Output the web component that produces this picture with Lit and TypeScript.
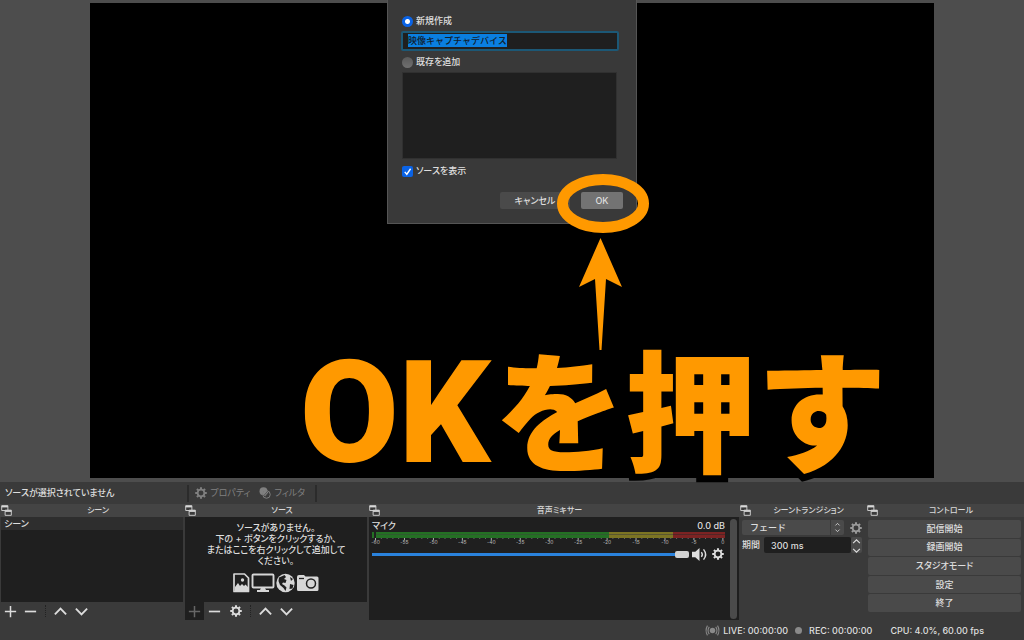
import { LitElement, html, css, svg, nothing } from "lit";
import { customElement, property, query } from "lit/decorators.js";

const controlsLabels = ["配信開始", "録画開始", "スタジオモード", "設定", "終了"];
const dbMarks = [-60, -55, -50, -45, -40, -35, -30, -25, -20, -15, -10, -5, 0];

const glyphs: Record<string, unknown> = {
  plus: svg`<path d="M8 2v12M2 8h12" stroke="currentColor" stroke-width="1.6" fill="none"/>`,
  minus: svg`<path d="M2 8h12" stroke="currentColor" stroke-width="1.8" fill="none"/>`,
  up: svg`<path d="M2 11 8 5l6 6" stroke="currentColor" stroke-width="2" fill="none"/>`,
  down: svg`<path d="M2 5l6 6 6-6" stroke="currentColor" stroke-width="2" fill="none"/>`,
  updown: svg`<path d="M5 5l3-3 3 3M5 11l3 3 3-3" stroke="currentColor" stroke-width="1.2" fill="none"/>`,
  gear: svg`<circle cx="8" cy="8" r="4.5" fill="none" stroke="currentColor" stroke-width="2.4"/>
    <g stroke="currentColor" stroke-width="2.8"><path d="M8 .3v2.700M8 13v2.700M.3 8h2.700M13 8h2.700M2.600 2.600l1.900 1.900M11.500 11.500l1.900 1.900M2.600 13.400l1.900-1.900M11.500 4.500l1.900-1.900"/></g>`,
  filter: svg`<circle cx="6" cy="5.500" r="5.300" fill="currentColor"/><circle cx="10" cy="10" r="5" fill="#3a3a3a" stroke="currentColor" stroke-width="1.300"/><path d="M5.500 11a5 5 0 0 1 6-6.500l1 3-4 5z" fill="currentColor"/><path d="M6 12l6-7M8 13l5-6" stroke="#3a3a3a" stroke-width=".8"/>`,
  float: svg`<path d="M1 1h9v7H1z" fill="#3a3a3a" stroke="currentColor" stroke-width="1.300"/><path d="M1 1h9v2.500H1z" fill="currentColor"/><path d="M6 7.500h9V15H6z" fill="#3a3a3a" stroke="currentColor" stroke-width="1.300"/><path d="M6 7.500h9V10H6z" fill="currentColor"/>`,
  speaker: svg`<path d="M0 5h3.500L8 1v14l-4.500-4H0z" fill="currentColor"/><path d="M10 5.500q2 2.500 0 5M12.300 2.500q4.500 5.500 0 11" stroke="currentColor" stroke-width="1.500" fill="none"/>`,
  live: svg`<circle cx="8" cy="8" r="3.400" fill="currentColor"/><path d="M4 3.500q-3 4.500 0 9M12 3.500q3 4.500 0 9M1.800 2q-3.500 6 0 12M14.200 2q3.500 6 0 12" stroke="currentColor" stroke-width="1.300" fill="none"/>`,
  check: svg`<path d="M4 8.500l3 3.500 5.500-8" stroke="#fff" stroke-width="2" fill="none"/>`,
};

function icon(name: string, size: number) {
  return html`<svg class="icon" width=${size} height=${size} viewBox="0 0 16 16" aria-hidden="true">${glyphs[name]}</svg>`;
}

const base = css`
  * { box-sizing: border-box; }
  :host { display: block; font-feature-settings: "palt"; }
  button, input, select { font: inherit; color: inherit; margin: 0; padding: 0; border: 0; border-radius: 0; background: none; outline: 0; min-width: 0; }
  .icon { display: block; flex: none; overflow: visible; }
`;

@customElement("dock-panel")
class DockPanel extends LitElement {
  @property() heading = "";
  static styles = [base, css`
    :host { display: flex; flex-direction: column; min-width: 0; }
    .head { display: grid; grid-template-columns: 11px 1fr; align-items: center; height: 13px; padding: 0 0 0 1px; background: #444; color: #d8d8d8; }
    h2 { margin: 0; font-size: 8px; line-height: 13px; font-weight: 500; text-align: center; white-space: nowrap; }
    .body { flex: 1; min-height: 0; display: flex; flex-direction: column; }
  `];
  render() {
    return html`<div class="head">${icon("float", 11)}<h2>${this.heading}</h2></div>
      <div class="body"><slot></slot></div>`;
  }
}

@customElement("list-tools")
class ListTools extends LitElement {
  @property({ type: Boolean }) sources = false;
  static styles = [base, css`
    :host { display: flex; height: 18px; margin: 0 1px 1px; background: #3a3a3a; color: #dcdcdc; }
    button { display: grid; place-items: center; width: 21px; height: 18px; }
    button:first-child { width: 19px; }
    button:disabled { background: #1f1f1f; color: #666; }
    .sep { width: 1px; margin: 3px 4px; border-left: 1px dotted #222; }
  `];
  render() {
    return html`
      <button aria-label="追加" ?disabled=${this.sources}>${icon("plus", 15)}</button>
      <button aria-label="削除">${icon("minus", 15)}</button>
      ${this.sources ? html`<button aria-label="設定">${icon("gear", 12)}</button>` : nothing}
      <span class="sep"></span>
      <button aria-label="上へ">${icon("up", 15)}</button>
      <button aria-label="下へ">${icon("down", 15)}</button>`;
  }
}

@customElement("source-dialog")
class SourceDialog extends LitElement {
  @query(".name") nameBox!: HTMLInputElement;
  static styles = [base, css`
    :host { display: flex; flex-direction: column; width: 250px; height: 224px; padding: 15px 19px 14px 14px; background: #393939; border: 1px solid #555; border-top: 0; color: #dedede; font-size: 9px; line-height: 12px; }
    .option { display: flex; align-items: center; gap: 3px; height: 12px; font-weight: 500; }
    .option input { appearance: none; flex: none; width: 11px; height: 11px; margin: 0; }
    .radio { border-radius: 50%; background: linear-gradient(#5a5a5a, #707070); }
    .radio:checked { background: radial-gradient(circle, #fff 0 2px, #0a63e6 3px); }
    .tick { display: grid; }
    .tick input { grid-area: 1 / 1; border-radius: 2px; background: #0a63e6; }
    .tick .icon { grid-area: 1 / 1; pointer-events: none; }
    .name { height: 20px; margin: 4px -2px 5px -1px; padding: 0 5px 2px; border: 2px solid #1c5876; border-radius: 2px; background: #1f1f1f; font-feature-settings: normal; font-weight: 500; }
    .name::selection { background: #0a7fe0; color: #10202e; }
    .existing { height: 87px; margin: 4px 0 6px; background: #1f1f1f; border: 1px solid #303030; }
    .actions { display: flex; justify-content: flex-end; gap: 11px; margin: 15px -6px 0 0; }
    .actions button { height: 17px; border-radius: 2px; background: #4a4a4a; font-weight: 500; }
    .cancel { width: 70px; }
    .actions .ok { width: 42px; background: #737373; }
  `];
  firstUpdated() {
    this.nameBox.focus();
    this.nameBox.select();
  }
  render() {
    return html`
      <label class="option"><input class="radio" type="radio" name="mode" checked />新規作成</label>
      <input class="name" aria-label="名前" .value=${"映像キャプチャデバイス"} />
      <label class="option"><input class="radio" type="radio" name="mode" />既存を追加</label>
      <div class="existing" role="listbox" aria-label="既存"></div>
      <label class="option"><span class="tick"><input type="checkbox" checked />${icon("check", 11)}</span>ソースを表示</label>
      <div class="actions"><button class="cancel">キャンセル</button><button class="ok">OK</button></div>`;
  }
}

@customElement("audio-mixer")
class AudioMixer extends LitElement {
  static styles = [base, css`
    :host { display: flex; flex: 1; margin: 0 0 1px 1px; padding: 2px 2px 1px 3px; gap: 5px; background: #1f1f1f; color: #dedede; font-size: 9px; line-height: 12px; }
    .strip { flex: 1; min-width: 0; }
    .line { display: flex; justify-content: space-between; height: 13px; padding-top: 1px; font-weight: 500; }
    .meter { display: flex; height: 6px; background: #1f1f1f; }
    .meter div { height: 6px; }
    .mark { width: 2px; margin-right: 2px; background: #247024; }
    .green { flex: 233; background: linear-gradient(#247024 0 2px, #2f5a2f 2px 3px, #247024 3px); }
    .olive { flex: 64; background: linear-gradient(#7c7423 0 2px, #5a562f 2px 3px, #7c7423 3px); }
    .red { flex: 52; background: linear-gradient(#7c2323 0 2px, #532525 2px 3px, #7c2323 3px); }
    .scale { display: block; width: 100%; height: 8px; overflow: visible; }
    .scale line { stroke: #aaa; }
    .scale .minor { stroke: #666; }
    .scale text { fill: #bbb; font-size: 5px; text-anchor: middle; }
    .fader { display: flex; align-items: center; gap: 3px; height: 12px; margin-top: 2px; }
    .fader input { appearance: none; flex: 1; height: 8px; background: linear-gradient(#2a82dc, #2a82dc) center / 100% 3px no-repeat; }
    .fader input::-webkit-slider-thumb { appearance: none; width: 14px; height: 7px; border-radius: 2px; background: #d2d2d2; }
    .fader button { display: grid; place-items: center; width: 15px; }
    .bar { width: 7px; border-radius: 4px; background: #4b4b4b; }
  `];
  render() {
    return html`
      <div class="strip">
        <div class="line"><label for="vol">マイク</label><span>0.0 dB</span></div>
        <div class="meter"><div class="mark"></div><div class="green"></div><div class="olive"></div><div class="red"></div></div>
        <svg class="scale" aria-hidden="true">
          ${Array.from({ length: 61 }, (_, i) => {
            const x = `${1 + i * 1.64}%`;
            return svg`<line class=${i % 5 ? "minor" : ""} x1=${x} x2=${x} y1="0" y2=${i % 5 ? 1 : 2}></line>`;
          })}
          ${dbMarks.map((m) => svg`<text x=${`${1 + (m + 60) * 1.64}%`} y="6">${m}</text>`)}
        </svg>
        <div class="fader">
          <input id="vol" type="range" min="0" max="100" .value=${"100"} />
          <button aria-label="ミュート">${icon("speaker", 15)}</button>
          <button aria-label="設定">${icon("gear", 12)}</button>
        </div>
      </div>
      <div class="bar"></div>`;
  }
}

@customElement("app-root")
class AppRoot extends LitElement {
  static styles = [base, css`
    :host { display: flex; flex-direction: column; position: relative; height: 100vh; overflow: hidden; background: #3a3a3a; color: #dedede; font-family: Inter, "Noto Sans CJK JP", sans-serif; font-size: 9px; line-height: 12px; }
    .preview { flex: 1; display: flex; padding: 3px 90px 4px; background: #4d4d4d; }
    .canvas { flex: 1; background: #000; }
    .context { display: flex; align-items: center; height: 22px; color: #808080; }
    .context p { width: 18%; margin: 0; padding-left: 5px; font-weight: 500; color: #dedede; }
    .context .rule { width: 2px; height: 17px; margin: 0 4px 0 3px; background: #2b2b2b; }
    .context button { display: flex; align-items: center; gap: 3px; margin: 0 7px 0 2px; }
    .docks { display: grid; grid-template-columns: 184fr 184fr 371fr 127fr 158fr; height: 117px; }
    .list { flex: 1; margin: 0 1px; background: #1f1f1f; }
    .item { height: 13px; padding-left: 3px; background: #2e2e2e; font-weight: 500; line-height: 13px; }
    .empty { display: flex; flex-direction: column; align-items: center; padding-top: 5px; line-height: 11px; text-align: center; font-weight: 500; }
    .kinds { display: block; margin-top: 7px; color: #d6d6d6; }
    .transition { display: grid; grid-template-columns: auto 1fr 11px; row-gap: 2px; align-items: center; padding: 3px 4px 0 3px; }
    .pick { grid-column: 1 / 4; display: grid; grid-template-columns: 1fr 14px 18px; height: 15px; align-items: center; }
    .pick select { grid-area: 1 / 1 / 2 / 3; height: 15px; appearance: none; padding-left: 8px; border-radius: 2px; background: #4a4a4a; font-feature-settings: normal; font-weight: 500; }
    .pick .arrows { grid-area: 1 / 2; display: grid; place-items: center; height: 15px; border-left: 1px solid #3a3a3a; pointer-events: none; }
    .pick button { display: grid; justify-content: end; align-items: center; color: #9a9a9a; }
    .transition label { width: 22px; font-weight: 500; }
    .duration { height: 16px; padding: 0 7px; border-radius: 2px; background: #1f1f1f; font-weight: 500; }
    .spin { display: grid; height: 16px; background: #4a4a4a; border-radius: 2px; }
    .spin button { display: grid; place-items: center; }
    .controls { display: grid; grid-auto-rows: 1fr; gap: 1px; height: 95px; padding: 3px 3px 0 2px; }
    .controls button { border-radius: 2px; background: #4a4a4a; font-weight: 500; }
    .status { display: flex; align-items: center; justify-content: flex-end; gap: 4px; height: 19px; padding-right: 40px; font-weight: 500; white-space: nowrap; }
    .status .icon { color: #8a8a8a; }
    .status i { width: 7px; height: 7px; margin: 0 3px; border-radius: 50%; background: #8a8a8a; }
    .status .cpu { margin-left: 14px; }
    source-dialog { position: absolute; top: 0; left: 50%; margin-left: -125px; }
    .pointer { position: absolute; top: 170px; left: 50%; margin-left: 40px; pointer-events: none; }
    .callout { position: absolute; top: 330px; left: 50%; display: flex; align-items: baseline; gap: 4px; margin-left: -212px; font-family: "Noto Sans CJK JP", sans-serif; font-weight: 900; font-size: 131px; line-height: 150px; font-feature-settings: normal; color: #ff9900; white-space: nowrap; -webkit-text-stroke: 14px #000; stroke-linejoin: round; paint-order: stroke fill; pointer-events: none; }
    .latin { font-family: Roboto, sans-serif; font-size: 143px; line-height: 120px; }
  `];
  render() {
    return html`
      <main class="preview"><div class="canvas"></div></main>
      <div class="context">
        <p>ソースが選択されていません</p>
        <span class="rule"></span>
        <button>${icon("gear", 12)}プロパティ</button>
        <button>${icon("filter", 12)}フィルタ</button>
        <span class="rule"></span>
      </div>
      <div class="docks">
        <dock-panel heading="シーン">
          <div class="list"><div class="item">シーン</div></div>
          <list-tools></list-tools>
        </dock-panel>
        <dock-panel heading="ソース">
          <div class="list empty">
            <span>ソースがありません。</span><span>下の + ボタンをクリックするか、</span><span>またはここを右クリックして追加して</span><span>ください。</span>
            <svg class="kinds" width="86" height="20" viewBox="0 0 86 20" aria-hidden="true">
              <path d="M1 1h10.500l4 4v13.500H1z" fill="none" stroke="currentColor" stroke-width="1.700" stroke-linejoin="round"/>
              <path d="M2 18v-4l3-4 2 3 2-2 2 2 1.500-1.500L15 14v4z" fill="currentColor"/><circle cx="9.500" cy="7" r="1.700" fill="currentColor"/>
              <rect x="19.500" y="1.500" width="21" height="13" rx="1" fill="none" stroke="currentColor" stroke-width="1.900"/><path d="M28 15h4l1 2h3v2H24v-2h3z" fill="currentColor"/>
              <circle cx="52.500" cy="10" r="9.200" fill="currentColor"/><path d="M46 4.500l3.500-1.500 2-1 1.500 2-2 2 2.500 1-1 3-2.500-.5-1 1.500 2.500 1.500 2 2-1 3.500-2-3-3.500-3-1.500-4zM57 4l3 2-2 2zM57 11l3.500 1-1 3.500-3 .5z" fill="#1f1f1f"/>
              <path d="M64 4q0-2 2-2h5l1.500 1.500H84q1.500 0 1.500 1.500v11.500q0 1.500-1.500 1.500H65.500Q64 18 64 16.500z" fill="currentColor"/><path d="M66 5.500h5" stroke="#1f1f1f" stroke-width="1.300"/><circle cx="78" cy="10.500" r="4.500" fill="none" stroke="#1f1f1f" stroke-width="1.500"/>
            </svg>
          </div>
          <list-tools sources></list-tools>
        </dock-panel>
        <dock-panel heading="音声ミキサー"><audio-mixer></audio-mixer></dock-panel>
        <dock-panel heading="シーントランジション">
          <div class="transition">
            <div class="pick">
              <select aria-label="シーントランジション"><option>フェード</option></select>
              <span class="arrows">${icon("updown", 11)}</span>
              <button aria-label="設定">${icon("gear", 12)}</button>
            </div>
            <label for="ms">期間</label>
            <input class="duration" id="ms" .value=${"300 ms"} />
            <div class="spin"><button aria-label="増やす">${icon("up", 9)}</button><button aria-label="減らす">${icon("down", 9)}</button></div>
          </div>
        </dock-panel>
        <dock-panel heading="コントロール">
          <div class="controls">${controlsLabels.map((t) => html`<button>${t}</button>`)}</div>
        </dock-panel>
      </div>
      <footer class="status">
        ${icon("live", 13)}<span>LIVE: 00:00:00</span><i></i><span>REC: 00:00:00</span><span class="cpu">CPU: 4.0%, 60.00 fps</span>
      </footer>
      <source-dialog></source-dialog>
      <div class="callout"><span class="latin">OK</span><span>を押す</span></div>
      <svg class="pointer" width="110" height="184" aria-hidden="true">
        <ellipse cx="51" cy="33.500" rx="40.500" ry="24" fill="none" stroke="#ff9900" stroke-width="11"/>
        <path d="M48.500 68 70 117l-16-8-4.500 71h-2l-4.500-71-16 8z" fill="#ff9900"/>
      </svg>`;
  }
}
